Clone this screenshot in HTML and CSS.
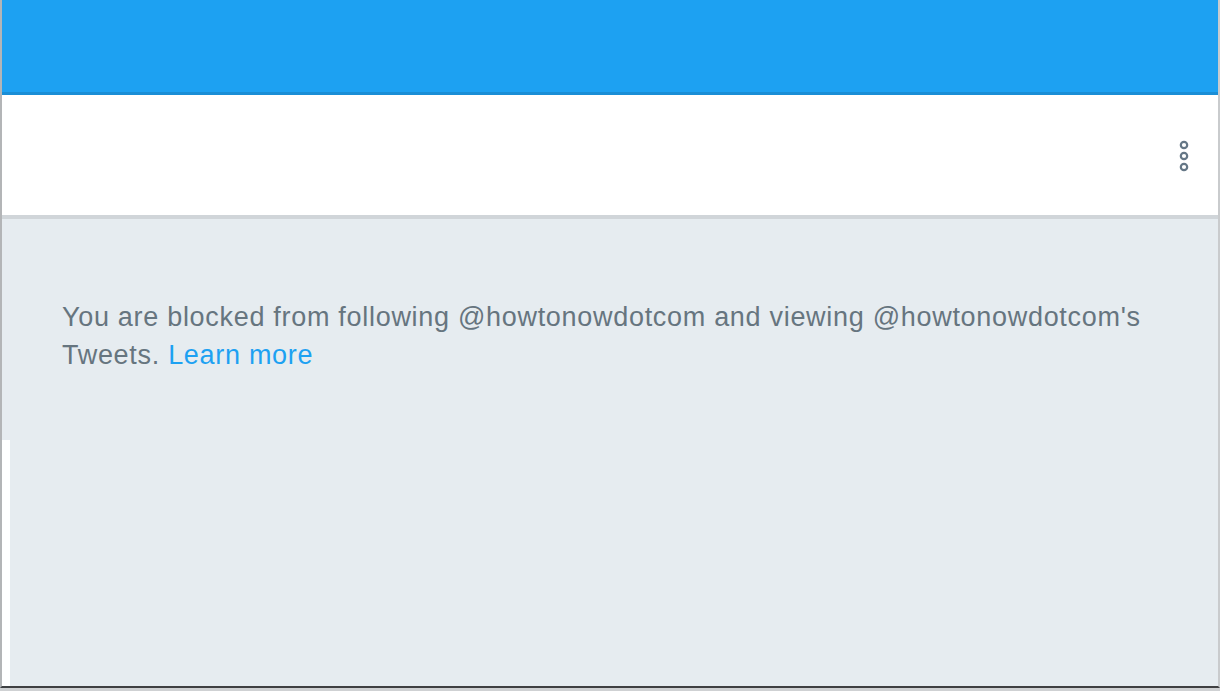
FILE: index.html
```html
<!DOCTYPE html>
<html lang="en">
<head>
<meta charset="utf-8">
<title>Blocked</title>
<link rel="stylesheet" href="styles.css">
</head>
<body>
<div class="frame">
  <header class="topbar"></header>
  <div class="toolbar">
    <button class="more" aria-label="More">
      <svg width="12" height="34" viewBox="0 0 12 34">
        <circle cx="6" cy="6" r="3.2" fill="none" stroke="#657786" stroke-width="2.2"/>
        <circle cx="6" cy="17" r="3.2" fill="none" stroke="#657786" stroke-width="2.2"/>
        <circle cx="6" cy="28" r="3.2" fill="none" stroke="#657786" stroke-width="2.2"/>
      </svg>
    </button>
  </div>
  <main class="content">
    <p class="message">You are blocked from following @howtonowdotcom and viewing @howtonowdotcom's Tweets. <a href="#" class="link">Learn more</a></p>
    <div class="lower">
      <div class="strip"></div>
    </div>
  </main>
</div>
</body>
</html>
```
FILE: styles.css
```css
html, body {
  margin: 0;
  padding: 0;
}
body {
  width: 1220px;
  height: 691px;
  overflow: hidden;
  background: #cfd1d3;
  font-family: "Liberation Sans", Arial, sans-serif;
}
.frame {
  height: 686px;
  display: flex;
  flex-direction: column;
  border-left: 2px solid #b3b5b7;
  border-right: 2px solid #c9cbcd;
  border-bottom: 2px solid #3f4042;
  background: #e6ecf0;
}
.topbar {
  height: 92px;
  background: #1da1f2;
  border-bottom: 3px solid #1a8ed6;
  flex: none;
}
.toolbar {
  height: 120px;
  background: #ffffff;
  border-bottom: 4px solid #d0d5d9;
  display: flex;
  align-items: center;
  justify-content: flex-end;
  padding-right: 28px;
  flex: none;
}
.more {
  border: 0;
  background: none;
  padding: 0;
  margin-top: 2px;
  display: flex;
}
.content {
  flex: 1;
  display: flex;
  flex-direction: column;
  padding-top: 79px;
}
.message {
  margin: 0;
  padding: 0 60px;
  font-size: 27px;
  line-height: 38px;
  letter-spacing: 0.7px;
  color: #66757f;
}
.link {
  color: #1da1f2;
  text-decoration: none;
}
.lower {
  flex: 1;
  margin-top: 66px;
  display: flex;
}
.strip {
  width: 8px;
  background: #ffffff;
}
```
